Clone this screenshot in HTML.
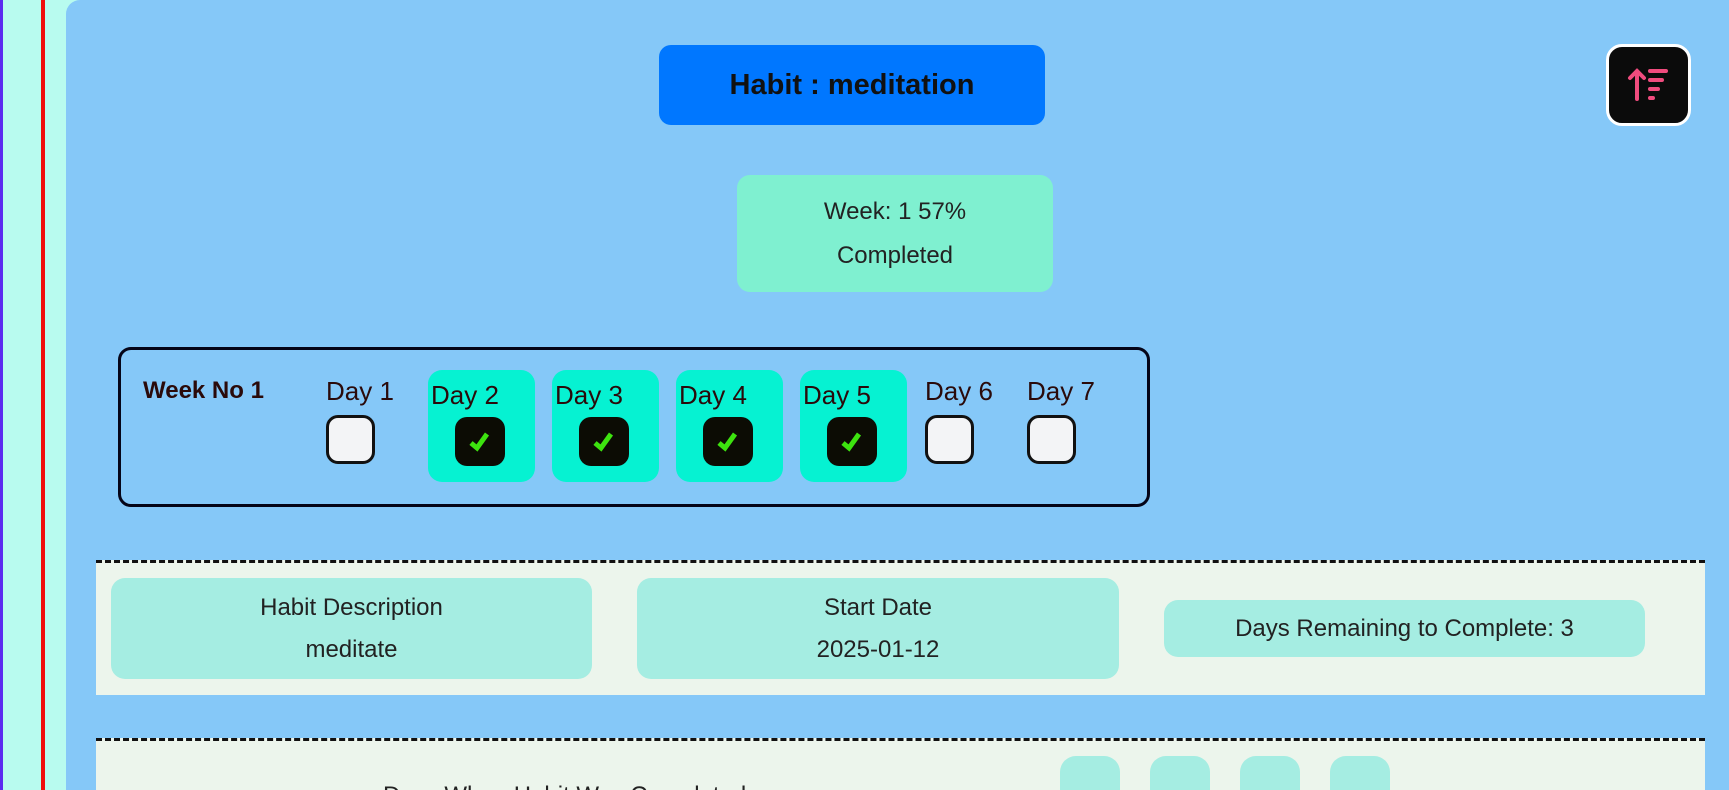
<!DOCTYPE html>
<html><head><meta charset="utf-8"><style>
*{margin:0;padding:0;box-sizing:border-box}
html,body{width:1729px;height:790px;overflow:hidden}
body{background:#b8fbef;font-family:"Liberation Sans",Arial,sans-serif;position:relative;color:#111}
.a{position:absolute}
.c{display:flex;align-items:center;justify-content:center;text-align:center}
.t{font-size:23px;color:#2a0a0a}
.cb{position:absolute;width:49px;height:49px;border:3px solid #111;border-radius:12px;background:#f3f4f6}
.tile{position:absolute;top:370px;width:107px;height:112px;background:#06f2d2;border-radius:14px}
.tile span{position:absolute;left:3px;top:10px;font-size:26px;color:#2a0a0a}
.ck{position:absolute;left:27px;top:47px;width:50px;height:49px;background:#0c0c04;border-radius:12px}
.card{position:absolute;background:#a5ede2;border-radius:14px;font-size:24px;color:#222;line-height:42px}
.pill{position:absolute;top:756px;width:60px;height:100px;background:#a5ede2;border-radius:16px 16px 0 0}
</style></head><body>
<div class="a" style="left:0;top:0;width:3px;height:1000px;background:#5b2bf0"></div>
<div class="a" style="left:41px;top:0;width:4px;height:1000px;background:#f00d0d"></div>
<div class="a" style="left:66px;top:0;width:1663px;height:1000px;background:#85c8f8;border-top-left-radius:14px"></div>

<div class="a c" style="left:659px;top:45px;width:386px;height:80px;background:#0077ff;border-radius:12px;font-size:29px;font-weight:bold;color:#111">Habit : meditation</div>

<div class="a c" style="left:1606px;top:44px;width:85px;height:82px;background:#0b0b0b;border:3px solid #fff;border-radius:16px">
<svg width="44" height="40" viewBox="0 0 44 40"><g stroke="#f04c7e" stroke-width="4" stroke-linecap="round" fill="none"><path d="M10 34V6M3 13L10 6L17 13"/><path d="M23 6H39M23 15H35M23 24H31M23 33H26"/></g></svg>
</div>

<div class="a c" style="left:737px;top:175px;width:316px;height:117px;background:#7ff0d0;border-radius:13px;font-size:24px;line-height:44px;color:#222">Week: 1 57%<br>Completed</div>

<div class="a" style="left:118px;top:347px;width:1032px;height:160px;border:3px solid #050518;border-radius:13px"></div>
<div class="a t" style="left:143px;top:377px;font-weight:bold;font-size:24px">Week No 1</div>
<div class="a t" style="left:326px;top:376px;font-size:26px">Day 1</div>
<div class="cb" style="left:326px;top:415px"></div>
<div class="tile" style="left:428px"><span>Day 2</span><div class="ck"><svg width="50" height="49" viewBox="0 0 50 49"><path d="M16 26L22 31L32 17" stroke="#3de30f" stroke-width="5" fill="none" stroke-linecap="butt"/></svg></div></div>
<div class="tile" style="left:552px"><span>Day 3</span><div class="ck"><svg width="50" height="49" viewBox="0 0 50 49"><path d="M16 26L22 31L32 17" stroke="#3de30f" stroke-width="5" fill="none" stroke-linecap="butt"/></svg></div></div>
<div class="tile" style="left:676px"><span>Day 4</span><div class="ck"><svg width="50" height="49" viewBox="0 0 50 49"><path d="M16 26L22 31L32 17" stroke="#3de30f" stroke-width="5" fill="none" stroke-linecap="butt"/></svg></div></div>
<div class="tile" style="left:800px"><span>Day 5</span><div class="ck"><svg width="50" height="49" viewBox="0 0 50 49"><path d="M16 26L22 31L32 17" stroke="#3de30f" stroke-width="5" fill="none" stroke-linecap="butt"/></svg></div></div>
<div class="a t" style="left:925px;top:376px;font-size:26px">Day 6</div>
<div class="cb" style="left:925px;top:415px"></div>
<div class="a t" style="left:1027px;top:376px;font-size:26px">Day 7</div>
<div class="cb" style="left:1027px;top:415px"></div>

<div class="a" style="left:96px;top:560px;width:1609px;height:135px;background:#ecf5ec;border-top:3px dashed #111"></div>
<div class="card c" style="left:111px;top:578px;width:481px;height:101px">Habit Description<br>meditate</div>
<div class="card c" style="left:637px;top:578px;width:482px;height:101px">Start Date<br>2025-01-12</div>
<div class="card c" style="left:1164px;top:600px;width:481px;height:57px">Days Remaining to Complete: 3</div>

<div class="a" style="left:96px;top:738px;width:1609px;height:200px;background:#ecf5ec;border-top:3px dashed #111"></div>
<div class="a" style="left:383px;top:782px;font-size:24px;color:#222">Days When Habit Was Completed</div>
<div class="pill" style="left:1060px"></div>
<div class="pill" style="left:1150px"></div>
<div class="pill" style="left:1240px"></div>
<div class="pill" style="left:1330px"></div>
</body></html>
